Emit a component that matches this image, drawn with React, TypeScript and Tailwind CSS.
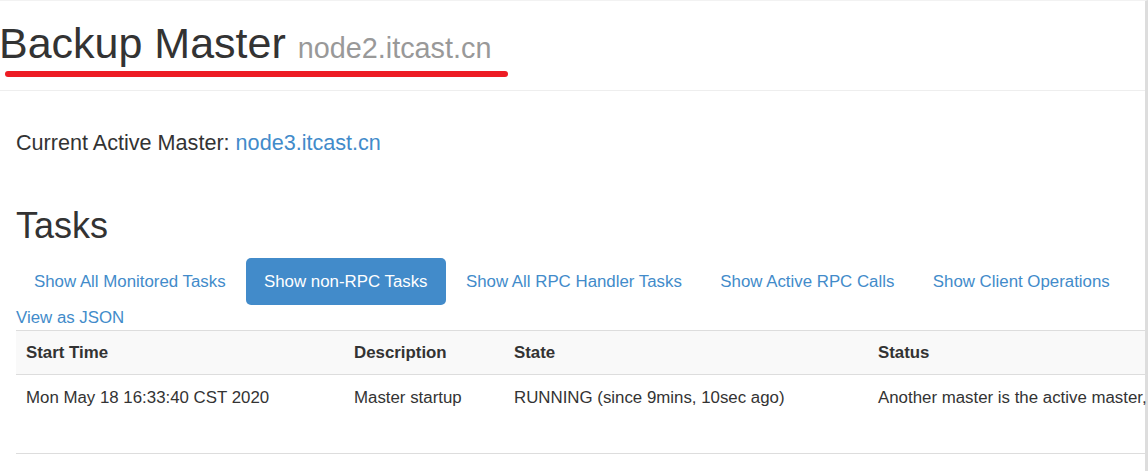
import React from 'react';

const tabs = [
  { label: 'Show All Monitored Tasks', active: false },
  { label: 'Show non-RPC Tasks', active: true },
  { label: 'Show All RPC Handler Tasks', active: false },
  { label: 'Show Active RPC Calls', active: false },
  { label: 'Show Client Operations', active: false },
];

const App = () => {
  return (
    <div className="w-[1148px] h-[471px] overflow-hidden bg-white text-[#333] font-['Liberation_Sans',Arial,sans-serif] flex">
      <div className="flex-1 min-w-0 border-r-[3px] border-[#ddd] border-t border-t-[#f2f2f2]">
        {/* page header */}
        <div className="relative h-[90px] border-b border-[#eee] pt-[19px]">
          <h1 className="text-[43px] leading-[47px] whitespace-nowrap -ml-[1px]">
            Backup Master <small className="text-[28.8px] text-[#999]">node2.itcast.cn</small>
          </h1>
          <div className="absolute left-[5px] top-[70px] w-[503px] h-[6px] rounded-full bg-[#ed1c24]"></div>
        </div>

        <div className="pl-4">
          <h4 className="mt-[40px] text-[21.6px] leading-[24px]">
            Current Active Master: <a className="text-[#428bca]">node3.itcast.cn</a>
          </h4>

          <h2 className="mt-[51px] text-[36px] leading-[40px]">Tasks</h2>

          <ul className="mt-[12px] flex gap-[2.4px] text-[16.85px] leading-[24px]">
            {tabs.map((t) => (
              <li key={t.label}>
                <a
                  className={
                    t.active
                      ? 'block px-[18px] py-[11.5px] rounded-[5px] bg-[#428bca] text-white whitespace-nowrap'
                      : 'block px-[18px] py-[11.5px] rounded-[5px] text-[#428bca] whitespace-nowrap'
                  }
                >
                  {t.label}
                </a>
              </li>
            ))}
          </ul>
          <a className="block mt-[1px] text-[16.85px] leading-[24px] text-[#428bca]">View as JSON</a>

          <table className="w-full table-fixed border-collapse text-[16.85px] leading-[24px]">
            <colgroup>
              <col className="w-[328px]" />
              <col className="w-[160px]" />
              <col className="w-[364px]" />
              <col />
            </colgroup>
            <thead>
              <tr className="bg-[#f9f9f9] border-t border-b border-[#ddd]">
                <th className="text-left font-bold px-[10px] pt-[10px] pb-[9px]">Start Time</th>
                <th className="text-left font-bold px-[10px] pt-[10px] pb-[9px]">Description</th>
                <th className="text-left font-bold px-[10px] pt-[10px] pb-[9px]">State</th>
                <th className="text-left font-bold px-[10px] pt-[10px] pb-[9px]">Status</th>
              </tr>
            </thead>
            <tbody>
              <tr className="border-b border-[#ddd] h-[79px] align-top">
                <td className="px-[10px] pt-[10.5px] whitespace-nowrap">Mon May 18 16:33:40 CST 2020</td>
                <td className="px-[10px] pt-[10.5px] whitespace-nowrap">Master startup</td>
                <td className="px-[10px] pt-[10.5px] whitespace-nowrap">RUNNING (since 9mins, 10sec ago)</td>
                <td className="pl-[10px] pt-[10.5px] whitespace-nowrap">
                  Another master is the active master,
                </td>
              </tr>
            </tbody>
          </table>
        </div>
      </div>
    </div>
  );
};

export default App;
